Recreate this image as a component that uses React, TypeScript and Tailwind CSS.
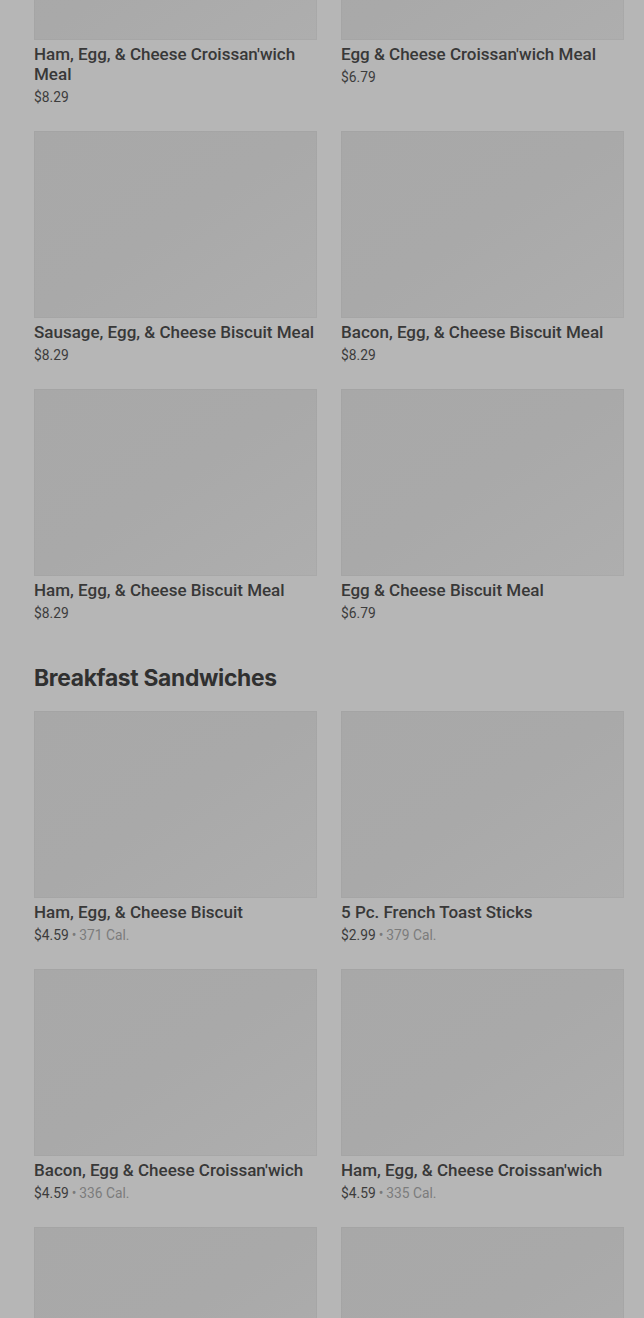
import React from "react";

type Item = { name: string; price: string; cal?: string };

const meals: Item[] = [
  { name: "Ham, Egg, & Cheese Croissan'wich Meal", price: "$8.29" },
  { name: "Egg & Cheese Croissan'wich Meal", price: "$6.79" },
  { name: "Sausage, Egg, & Cheese Biscuit Meal", price: "$8.29" },
  { name: "Bacon, Egg, & Cheese Biscuit Meal", price: "$8.29" },
  { name: "Ham, Egg, & Cheese Biscuit Meal", price: "$8.29" },
  { name: "Egg & Cheese Biscuit Meal", price: "$6.79" },
];

const sandwiches: Item[] = [
  { name: "Ham, Egg, & Cheese Biscuit", price: "$4.59", cal: "371 Cal." },
  { name: "5 Pc. French Toast Sticks", price: "$2.99", cal: "379 Cal." },
  { name: "Bacon, Egg & Cheese Croissan'wich", price: "$4.59", cal: "336 Cal." },
  { name: "Ham, Egg, & Cheese Croissan'wich", price: "$4.59", cal: "335 Cal." },
  { name: "", price: "" },
  { name: "", price: "" },
];

function Card({ item }: { item: Item }) {
  return (
    <div className="flex flex-col">
      <div className="h-[187px] w-full bg-gradient-to-br from-[#a8a8a8] via-[#a9a9a9] to-[#aeaeae] shadow-[inset_0_0_0_1px_rgba(0,0,0,0.025)]" />
      {item.name && (
        <div className="mt-[4px] text-[17px] leading-[20px] font-medium text-[#383838]">{item.name}</div>
      )}
      {item.price && (
        <div className="mt-[3px] text-[13.8px] leading-[20px] text-[#3c3c3c]">
          {item.price}
          {item.cal && (
            <>
              <span className="mx-[3px] text-[#7a7a7a]">•</span>
              <span className="text-[#7c7c7c]">{item.cal}</span>
            </>
          )}
        </div>
      )}
    </div>
  );
}

export default function App() {
  return (
    <div
      className="h-[1318px] w-[644px] overflow-hidden bg-[#b6b6b6]"
      style={{ fontFamily: "Roboto, 'Liberation Sans', sans-serif" }}
    >
      <div className="-mt-[147px] pl-[34px] pr-[20px]">
        <div className="grid grid-cols-2 gap-x-[24px] gap-y-[24px]">
          {meals.map((m, i) => (
            <Card key={i} item={m} />
          ))}
        </div>
        <h2
          className="mt-[40px] mb-[18px] text-[22.8px] leading-[30px] font-bold text-[#303030] tracking-[-0.3px]"
          style={{ fontFamily: "Inter, 'Liberation Sans', sans-serif" }}
        >
          Breakfast Sandwiches
        </h2>
        <div className="grid grid-cols-2 gap-x-[24px] gap-y-[24px]">
          {sandwiches.map((m, i) => (
            <Card key={i} item={m} />
          ))}
        </div>
      </div>
    </div>
  );
}
